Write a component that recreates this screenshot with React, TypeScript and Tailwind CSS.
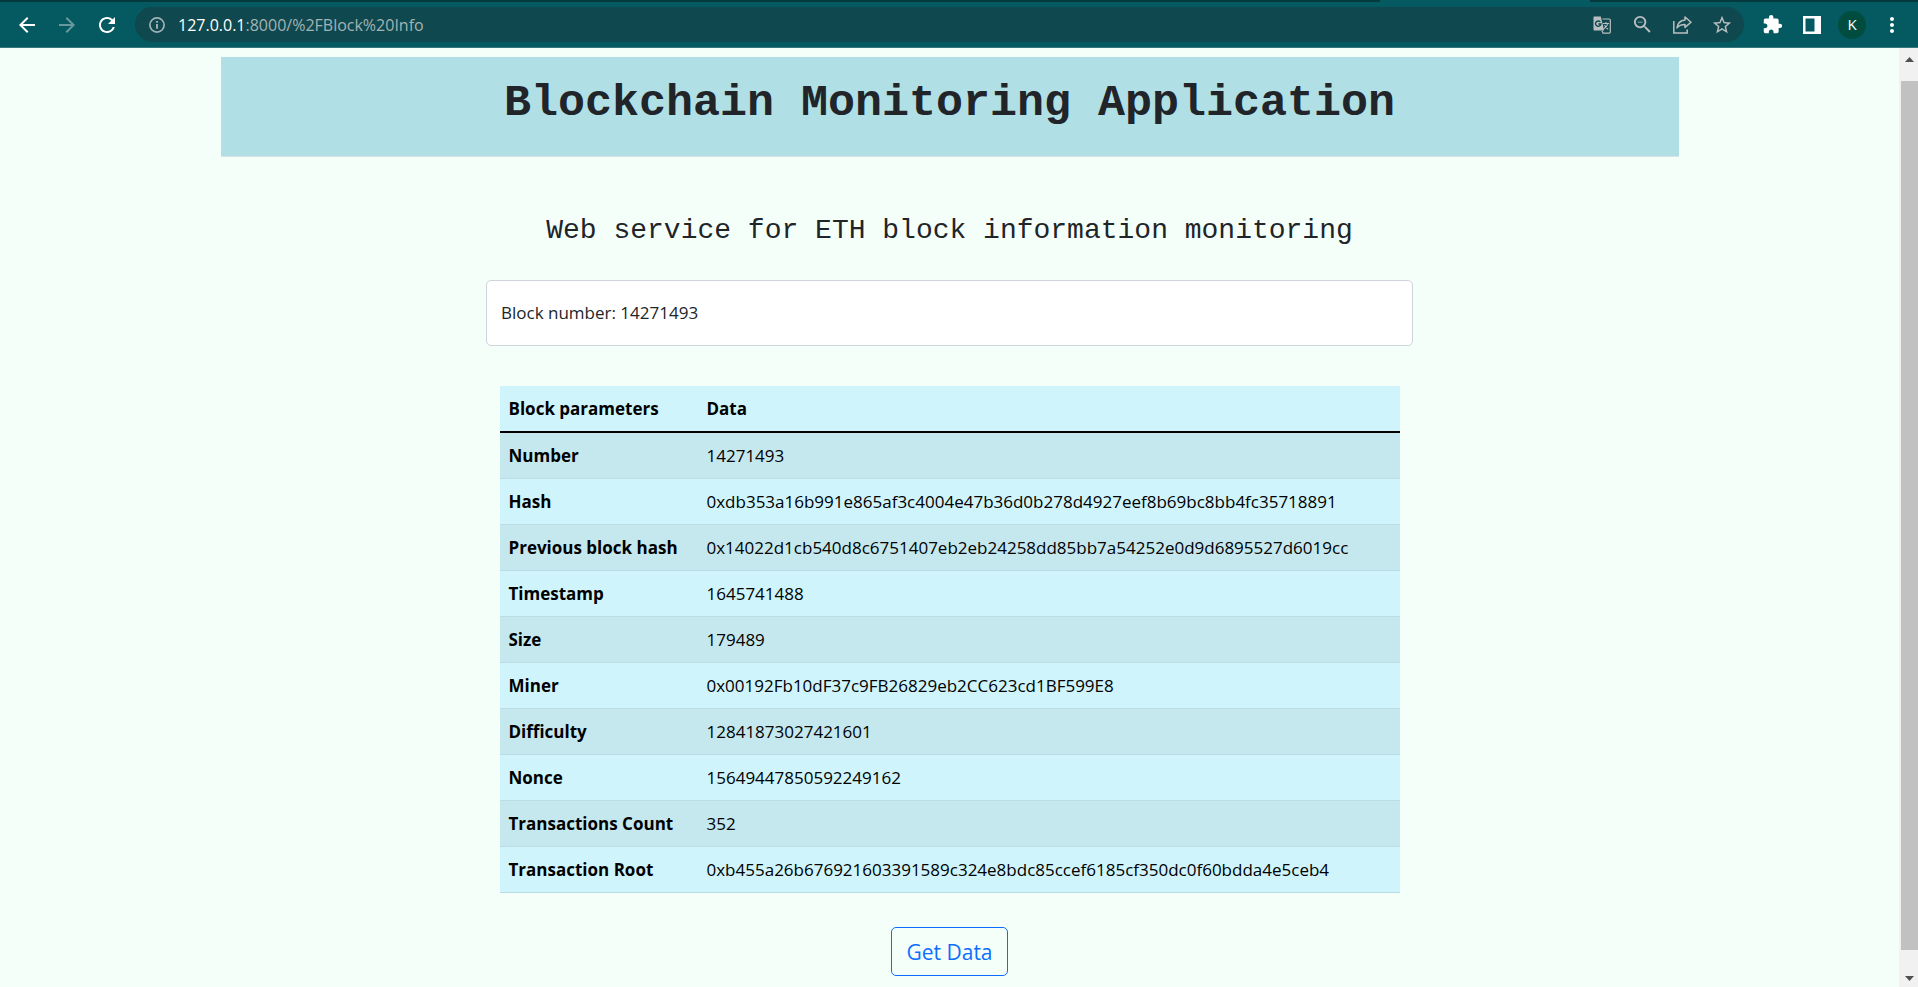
import type { ReactNode } from "react";
import {
  MdArrowBack,
  MdArrowForward,
  MdExtension,
  MdMoreVert,
  MdRefresh,
  MdStarBorder,
  MdZoomOut,
} from "react-icons/md";

const rows: [string, string][] = [
  ["Number", "14271493"],
  ["Hash", "0xdb353a16b991e865af3c4004e47b36d0b278d4927eef8b69bc8bb4fc35718891"],
  ["Previous block hash", "0x14022d1cb540d8c6751407eb2eb24258dd85bb7a54252e0d9d6895527d6019cc"],
  ["Timestamp", "1645741488"],
  ["Size", "179489"],
  ["Miner", "0x00192Fb10dF37c9FB26829eb2CC623cd1BF599E8"],
  ["Difficulty", "12841873027421601"],
  ["Nonce", "15649447850592249162"],
  ["Transactions Count", "352"],
  ["Transaction Root", "0xb455a26b676921603391589c324e8bdc85ccef6185cf350dc0f60bdda4e5ceb4"],
];

function IconButton({ label, children }: { label: string; children: ReactNode }) {
  return (
    <button type="button" aria-label={label} className="flex size-6 shrink-0 items-center justify-center">
      {children}
    </button>
  );
}

function InfoIcon() {
  return (
    <svg width="16" height="16" viewBox="0 0 16 16" fill="none" stroke="currentColor" className="mr-[13px] ml-[2px] shrink-0">
      <circle cx="8" cy="8" r="7.100" strokeWidth="1.700" />
      <path d="M8 7v4.800M8 4.100v1.700" strokeWidth="1.900" />
    </svg>
  );
}

function TranslateIcon() {
  return (
    <svg width="18" height="18" viewBox="0 0 18 18" fill="none" stroke="currentColor">
      <path d="M9.500 3h6.700c.6 0 1.100.5 1.100 1.100v12c0 .6-.5 1.100-1.100 1.100H10l-1-2.500" strokeWidth="1.200" />
      <path d="M10 7.500h6M13 6v1.500M14.800 7.500c-.5 2.300-2 4.200-4 5.300M11.600 9c.8 1.900 2 3.200 3.600 4.200" strokeWidth="1.100" />
      <path d="M1.500.5h6.300l3.400 14H1.500c-.6 0-1-.4-1-1v-12c0-.6.4-1 1-1z" fill="currentColor" stroke="none" />
      <path d="M7.300 5.900A2.700 2.700 0 1 0 7.900 8H5.400" stroke="#0f484e" strokeWidth="1.400" />
    </svg>
  );
}

function ShareIcon() {
  return (
    <svg width="20" height="20" viewBox="0 0 20 20" fill="none" stroke="currentColor" strokeWidth="1.500">
      <path d="M1.800 6v12h13.400v-3.500" />
      <path d="M13 2l6 5.200-6 5.200V9.500c-3.500-.1-6 .9-8 3.400.5-4.200 3.400-7.300 8-7.800z" strokeLinejoin="round" />
    </svg>
  );
}

function BrowserBar() {
  return (
    <header className="h-12 shrink-0 border-b border-[#35777c] bg-[#045a60] text-white">
      <div className="flex h-[2px] justify-end bg-[#04393e]">
        <div className="mr-[328px] w-[210px] bg-[#045a60]" />
      </div>
      <div className="flex h-[45px] items-center pr-[14px] pl-[15px]">
        <div className="flex gap-4 pr-4">
          <IconButton label="Back"><MdArrowBack size={24} /></IconButton>
          <span className="flex text-[#69999c]">
            <IconButton label="Forward"><MdArrowForward size={24} /></IconButton>
          </span>
          <IconButton label="Reload"><MdRefresh size={26} /></IconButton>
        </div>
        <div className="flex h-[35px] grow items-center rounded-full bg-[#0f484e] pr-[10px] pl-3 text-[#a3b3b5]">
          <InfoIcon />
          <div role="textbox" aria-label="Address" className="grow text-[16px] leading-6">
            <span className="text-white">127.0.0.1</span>:8000/%2FBlock%20Info
          </div>
          <div className="flex gap-4 text-[#b9bfc0]">
            <IconButton label="Translate"><TranslateIcon /></IconButton>
            <IconButton label="Zoom out"><MdZoomOut size={23} /></IconButton>
            <IconButton label="Share"><ShareIcon /></IconButton>
            <IconButton label="Bookmark"><MdStarBorder size={22} /></IconButton>
          </div>
        </div>
        <div className="flex items-center gap-4 pl-4">
          <IconButton label="Extensions"><MdExtension size={21} /></IconButton>
          <IconButton label="Side panel">
            <svg width="18" height="18" viewBox="0 0 18 18">
              <path fill="currentColor" fillRule="evenodd" d="M0 0h18v18H0zM2.500 2.500v13h9v-13z" />
            </svg>
          </IconButton>
          <button type="button" aria-label="Profile" className="-mx-0.5 flex size-7 items-center justify-center rounded-full bg-[#004d40] text-[15px]">
            K
          </button>
          <IconButton label="Menu"><MdMoreVert size={24} /></IconButton>
        </div>
      </div>
    </header>
  );
}

function Scrollbar() {
  return (
    <div className="flex w-[19px] shrink-0 flex-col items-end bg-[#f1f1f1]" aria-hidden="true">
      <div className="flex h-[33px] w-[17px] justify-center pt-[9px]">
        <svg width="9" height="5" viewBox="0 0 9 5"><path d="M0 5l4.500-5L9 5z" fill="#505050" /></svg>
      </div>
      <div className="w-[17px] grow bg-[#c1c1c1]" />
      <div className="flex h-[37px] w-[17px] items-end justify-center pb-[6px]">
        <svg width="9" height="5" viewBox="0 0 9 5"><path d="M0 0l4.500 5L9 0z" fill="#505050" /></svg>
      </div>
    </div>
  );
}

export default function App() {
  return (
    <div className="flex h-screen flex-col overflow-hidden bg-[#f5fffa] font-['Open_Sans','Noto_Sans',sans-serif]">
      <BrowserBar />
      <div className="flex min-h-0 grow">
        <main className="flex grow flex-col items-center overflow-hidden px-4 pt-[9px]">
          <div className="h-[100px] w-full max-w-[1458px] shrink-0 border-b border-[#dee2e6] bg-[#b0e0e6] pt-5 text-center">
            <h1 className="font-['Liberation_Mono',monospace] text-[45px] leading-[54px] font-bold text-[#212529]">
              Blockchain Monitoring Application
            </h1>
          </div>
          <h2 className="mt-14 font-['Liberation_Mono',monospace] text-[28px] leading-9 text-[#212529]">
            Web service for ETH block information monitoring
          </h2>
          <form className="mt-[31px] flex w-full max-w-[927px] flex-col items-center" onSubmit={(e) => e.preventDefault()}>
            <input
              type="text"
              aria-label="Block number"
              defaultValue="Block number: 14271493"
              className="h-[66px] w-full rounded-[5px] border border-[#ced4da] bg-white px-[14px] pb-[2px] text-[17px] text-[#212529] outline-none"
            />
            <table className="mt-10 w-full max-w-[900px] border-collapse text-left text-[17px] leading-[27px] text-black">
              <thead>
                <tr className="border-b-2 border-black bg-[#cff4fc]">
                  <th scope="col" className="w-[198px] px-[9px] py-[9px] font-bold">Block parameters</th>
                  <th scope="col" className="px-[9px] py-[9px] font-bold">Data</th>
                </tr>
              </thead>
              <tbody>
                {rows.map(([name, value]) => (
                  <tr key={name} className="border-b border-[#badce3] odd:bg-[#c5e8ef] even:bg-[#cff4fc]">
                    <th scope="row" className="px-[9px] py-[9px] font-bold">{name}</th>
                    <td className="px-[9px] py-[9px]">{value}</td>
                  </tr>
                ))}
              </tbody>
            </table>
            <button type="submit" className="mt-[34px] h-[49px] rounded-[5px] border border-[#0d6efd] px-[14px] text-[21px] leading-[30px] text-[#0d6efd]">
              Get Data
            </button>
          </form>
        </main>
        <Scrollbar />
      </div>
    </div>
  );
}
